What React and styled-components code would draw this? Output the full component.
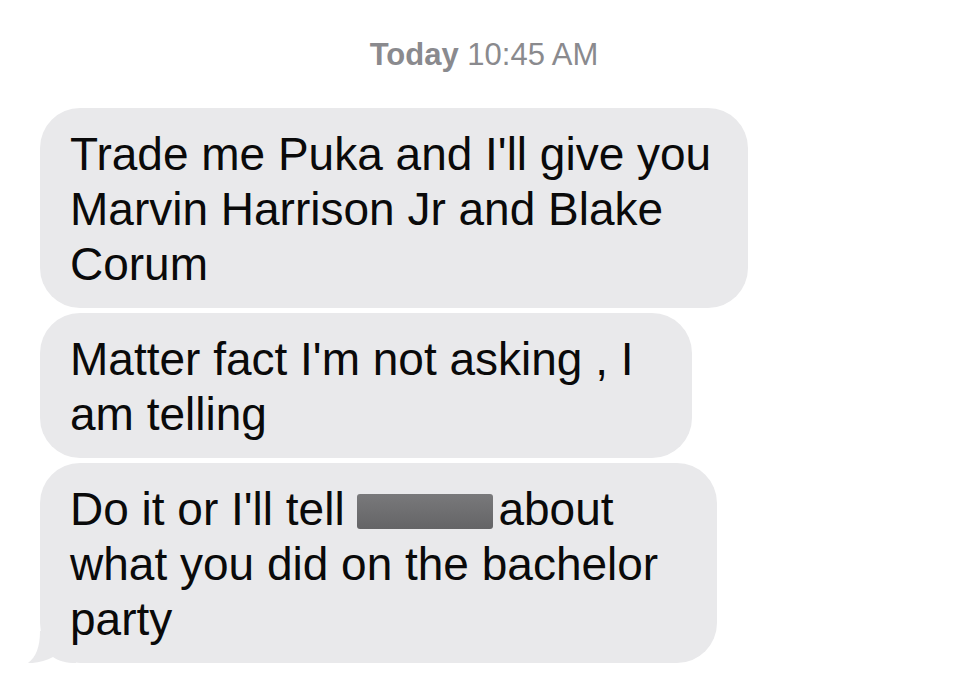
import React from "react";
import styled, { createGlobalStyle } from "styled-components";

const GlobalStyle = createGlobalStyle`
  html, body {
    margin: 0;
    padding: 0;
    background: #ffffff;
  }
  body {
    font-family: "Liberation Sans", Arial, sans-serif;
  }
`;

const Screen = styled.div`
  width: 968px;
  height: 693px;
  overflow: hidden;
  background: #ffffff;
  display: flex;
  flex-direction: column;
  padding: 36px 0 0 40px;
  box-sizing: border-box;
`;

const Stamp = styled.div`
  align-self: center;
  margin-left: -40px;
  font-size: 31px;
  line-height: 37px;
  color: #8a8a8e;
  margin-bottom: 35px;

  b {
    font-weight: 600;
  }
`;

const Thread = styled.div`
  display: flex;
  flex-direction: column;
  align-items: flex-start;
  gap: 5px;
`;

const Bubble = styled.div`
  position: relative;
  z-index: 0;
  width: ${(p) => p.$w}px;
  box-sizing: border-box;
  background: #e9e9eb;
  border-radius: 40px;
  padding: 19px 20px 16px 30px;
  font-size: 46px;
  line-height: 55px;
  color: #0a0a0a;
  white-space: nowrap;
`;

const Line = styled.div``;

const Redacted = styled.span`
  display: inline-block;
  width: 136px;
  height: 35px;
  margin-right: 5px;
  vertical-align: -4px;
  border-radius: 3px;
  background: linear-gradient(180deg, #79797b 0%, #646466 100%);
`;

const Tail = styled.svg`
  position: absolute;
  z-index: -1;
  left: -14px;
  bottom: 0;
  width: 50px;
  height: 32px;
`;

export default function App() {
  return (
    <>
      <GlobalStyle />
      <Screen>
        <Stamp>
          <b>Today</b> 10:45 AM
        </Stamp>
        <Thread>
          <Bubble $w={708}>
            <Line>Trade me Puka and I'll give you</Line>
            <Line>Marvin Harrison Jr and Blake</Line>
            <Line>Corum</Line>
          </Bubble>
          <Bubble $w={652}>
            <Line>Matter fact I'm not asking , I</Line>
            <Line>am telling</Line>
          </Bubble>
          <Bubble $w={677}>
            <Line>
              Do it or I'll tell <Redacted />about
            </Line>
            <Line>what you did on the bachelor</Line>
            <Line>party</Line>
            <Tail viewBox="0 0 50 32">
              <path
                d="M14 0 C14 16 10 26 2 32 C10 32.5 20 30 27 26 C33 30 40 32 50 32 L50 0 Z"
                fill="#e9e9eb"
              />
            </Tail>
          </Bubble>
        </Thread>
      </Screen>
    </>
  );
}
